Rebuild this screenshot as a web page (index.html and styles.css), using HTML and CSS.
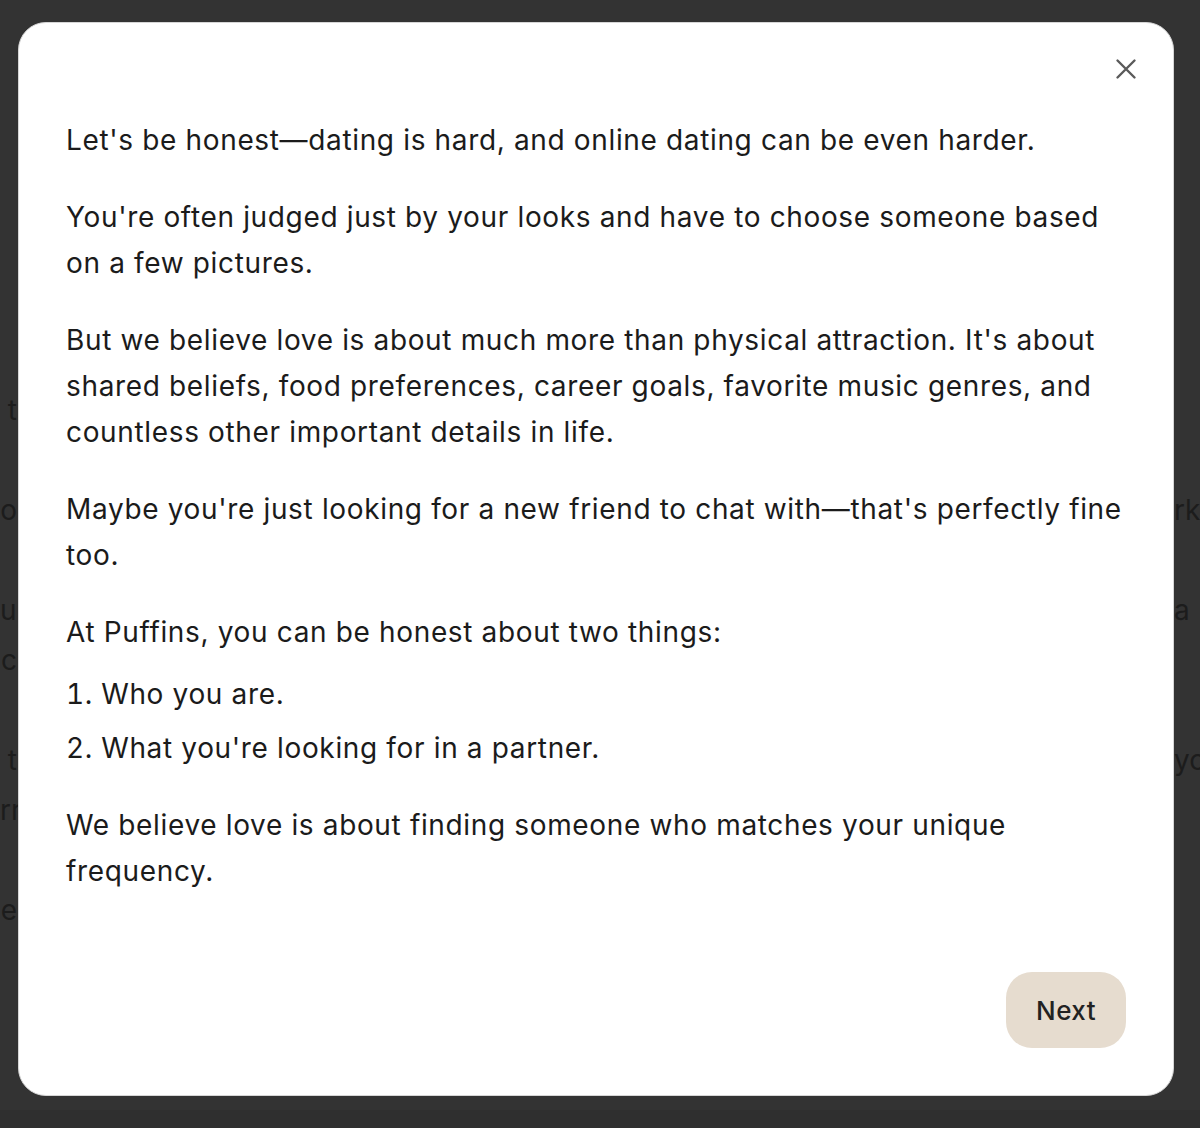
FILE: index.html
```html
<!DOCTYPE html>
<html lang="en">
<head>
    <meta charset="UTF-8">
    <meta name="viewport" content="width=device-width, initial-scale=1.0">
    <title>Puffins</title>
    <link rel="stylesheet" href="styles.css">
</head>
<body>

    <!-- Page behind the dialog (dimmed) -->
    <div class="page">
        <div class="page-row"><span class="edge-left">t</span><span class="edge-right"></span></div>
        <div class="page-row"></div>
        <div class="page-row"><span class="edge-left">o</span><span class="edge-right">rk</span></div>
        <div class="page-row"></div>
        <div class="page-row"><span class="edge-left">ul</span><span class="edge-right">a</span></div>
        <div class="page-row"><span class="edge-left">c</span><span class="edge-right"></span></div>
        <div class="page-row"></div>
        <div class="page-row"><span class="edge-left">t</span><span class="edge-right">yo</span></div>
        <div class="page-row"><span class="edge-left">rr</span><span class="edge-right"></span></div>
        <div class="page-row"></div>
        <div class="page-row"><span class="edge-left">e</span><span class="edge-right"></span></div>
    </div>
    <div class="page-footer"></div>

    <!-- Intro dialog -->
    <div class="overlay">
        <div class="modal">
            <button class="close-btn" aria-label="Close">
                <svg width="22" height="22" viewBox="0 0 22 22">
                    <path d="M2.5 2.5 L19.5 19.5 M19.5 2.5 L2.5 19.5" stroke="#5a5a5a" stroke-width="2.4" stroke-linecap="round" fill="none"/>
                </svg>
            </button>

            <div class="modal-body">
                <p>Let's be honest—dating is hard, and online dating can be even harder.</p>
                <p>You're often judged just by your looks and have to choose someone based on a few pictures.</p>
                <p>But we believe love is about much more than physical attraction. It's about shared beliefs, food preferences, career goals, favorite music genres, and countless other important details in life.</p>
                <p>Maybe you're just looking for a new friend to chat with—that's perfectly fine too.</p>
                <p class="lead">At Puffins, you can be honest about two things:</p>
                <ol>
                    <li>Who you are.</li>
                    <li>What you're looking for in a partner.</li>
                </ol>
                <p>We believe love is about finding someone who matches your unique frequency.</p>
            </div>

            <div class="modal-footer">
                <button class="next-btn">Next</button>
            </div>
        </div>
    </div>

</body>
</html>
```

FILE: styles.css
```css
body {
    margin: 0;
    background-color: #333333;
    font-family: Inter, "Noto Sans", sans-serif;
    color: #1b1b1b;
    height: 1128px;
    overflow: hidden;
}

/* Dimmed page behind the dialog */
.page {
    padding-top: 385px;
    height: 725px;
}

.page-row {
    height: 50px;
    display: flex;
    justify-content: space-between;
    align-items: center;
    font-size: 28px;
    color: #1c1c1c;
}

.edge-left {
    width: 17px;
    text-align: right;
    white-space: nowrap;
}

.edge-right {
    width: 26px;
    white-space: nowrap;
}

.page-footer {
    height: 18px;
    background-color: #2f2f2f;
}

/* Dialog */
.overlay {
    position: absolute;
    top: 0;
    left: 0;
    width: 100%;
}

.modal {
    position: relative;
    margin: 22px 26px 0 18px;
    height: 1074px;
    box-sizing: border-box;
    background-color: #ffffff;
    border: 1px solid #d6d6d6;
    border-radius: 28px;
    padding: 94px 47px 47px 47px;
    display: flex;
    flex-direction: column;
}

.close-btn {
    position: absolute;
    top: 24px;
    right: 25px;
    width: 44px;
    height: 44px;
    border: none;
    background: none;
    padding: 0;
    cursor: pointer;
    display: flex;
    align-items: center;
    justify-content: center;
}

.modal-body {
    flex: 1;
    font-size: 28px;
    line-height: 46px;
    letter-spacing: 0.65px;
}

.modal-body p {
    margin: 0 0 31px 0;
}

.modal-body p.lead {
    margin-bottom: 16px;
}

.modal-body ol {
    margin: 0 0 31px 0;
    padding: 0;
    list-style-position: inside;
}

.modal-body li {
    margin-bottom: 8px;
}

.modal-body li:last-child {
    margin-bottom: 0;
}

.modal-footer {
    display: flex;
    justify-content: flex-end;
}

.next-btn {
    width: 120px;
    height: 76px;
    border: none;
    border-radius: 26px;
    background-color: #e6dccf;
    color: #222222;
    font-family: Inter, "Noto Sans", sans-serif;
    font-size: 26px;
    font-weight: 500;
    letter-spacing: 0.4px;
    cursor: pointer;
}

.next-btn:hover {
    background-color: #ddd1c1;
}
```
